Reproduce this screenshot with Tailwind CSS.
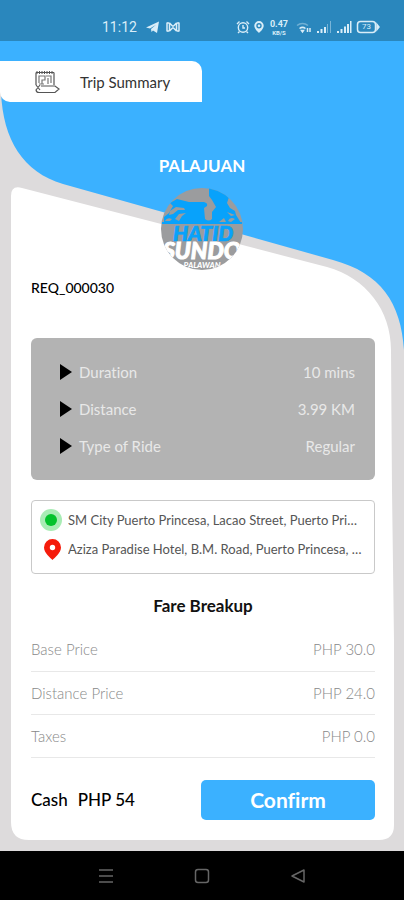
<!DOCTYPE html>
<html lang="en">
<head>
  <meta charset="UTF-8" />
  <meta name="viewport" content="width=device-width, initial-scale=1" />
  <title>Trip Summary</title>
  <script src="https://cdn.jsdelivr.net/npm/@tailwindcss/browser@4"></script>
</head>

<body class="flex flex-col min-h-screen bg-[#dddbdc] font-['Lato',sans-serif] [font-variant-ligatures:none] text-black">

  <!-- Status bar -->
  <header class="flex items-end justify-between h-[41px] pb-1 pl-[102px] pr-6 bg-[#2a87bd] text-[#d9edf8]">
    <div class="flex items-center gap-1 h-5">
      <span class="font-['Roboto',sans-serif] text-sm leading-5">11:12</span>
      <svg class="w-4 h-4 ml-1" viewBox="0 0 16 16" fill="currentColor"><path d="M1 8.500 14 2.500 12 14 8 11.500 6.500 13 6 10 11 5.800 5 9.500z"/></svg>
      <svg class="w-4 h-4" viewBox="0 0 16 16" fill="none" stroke="currentColor" stroke-width="1.500"><path d="M2 3.500v9M4.500 4l3 3h1l3-3M4.500 12l3-3h1l3 3M14 3.500v9M4.500 4v8M11.500 4v8"/><path d="M2 4h2.500M2 12h2.500M11.500 4H14M11.500 12H14"/></svg>
    </div>
    <div class="flex items-center h-5">
      <svg class="w-[14px] h-[14px]" viewBox="0 0 14 14" fill="none" stroke="currentColor" stroke-width="1.400"><circle cx="7" cy="7.500" r="4.700"/><path d="M7 5v3h2M1 4l2.500-2.500M13 4l-2.500-2.500M3.500 11.500 2 13M10.500 11.500 12 13"/></svg>
      <svg class="w-[14px] h-[14px] ml-[2px]" viewBox="0 0 14 14" fill="currentColor"><path fill-rule="evenodd" d="M7 1a4.700 4.700 0 0 1 4.700 4.700C11.700 9 7 13 7 13S2.300 9 2.300 5.700A4.700 4.700 0 0 1 7 1zm0 2a2.700 2.700 0 1 0 0 5.400A2.700 2.700 0 0 0 7 3z"/><circle cx="7" cy="5.700" r="1.300"/></svg>
      <div class="flex flex-col items-center ml-1 font-['Roboto',sans-serif] font-bold text-center">
        <span class="text-[9px] leading-[10px]">0.47</span>
        <span class="text-[6px] leading-[7px]">KB/S</span>
      </div>
      <svg class="w-4 h-[14px] ml-2" viewBox="0 0 16 14" fill="none" stroke="currentColor" stroke-width="1.500"><path d="M1 5.500a9 9 0 0 1 11 0" opacity=".4"/><path d="M3.500 8.500a5 5 0 0 1 6 0"/><path d="M5.500 10.500 6.500 12l1-1.500zM11.500 8v4M14 8v4"/></svg>
      <svg class="w-4 h-[14px] ml-1" viewBox="0 0 16 14" fill="currentColor"><path d="M1 11h2v2H1zM4.500 9h2v4h-2zM8 7h2v6H8z"/><path d="M11 4h1v9h-1zM14 1h1v12h-1z" opacity=".45"/></svg>
      <svg class="w-4 h-[14px] ml-1" viewBox="0 0 16 14" fill="currentColor"><path d="M1 11h2v2H1zM4.500 9h2v4h-2zM8 6.500h2V13H8zM11 4h2v9h-2zM14 1h1.500v12H14z"/></svg>
      <div class="relative ml-1 w-6 h-[14px]">
        <svg class="w-6 h-[14px]" viewBox="0 0 24 14" fill="none" stroke="currentColor" stroke-width="1.500"><rect x="1.500" y="1.500" width="18" height="11" rx="3"/><path d="M21 4.500 23 7l-2 2.500z" fill="currentColor"/></svg>
        <span class="absolute inset-0 pr-[3px] text-center font-['Roboto',sans-serif] text-[8px] leading-[14px]">73</span>
      </div>
    </div>
  </header>

  <main class="relative flex flex-col grow pb-[11px]">

    <!-- Blue header and white card shapes -->
    <svg class="absolute inset-0 w-full h-full" viewBox="0 41 404 810" preserveAspectRatio="none" aria-hidden="true">
      <path fill="#3bb1ff" d="M0 41H404V350C401 303 381 273 333 260L63 184C23 172 3 140 1 92L0 90z"/>
      <path fill="#fff" d="M11 196Q11 185 22 188L327 267C366 278 391 310 391 350L392 490 394 640V825Q394 840 379 840H29Q11 840 11 822z"/>
    </svg>

    <div class="relative flex flex-col grow">
      <div class="flex items-center mt-5 h-[41px] w-1/2 pl-[34px] gap-5 bg-white rounded-tr-[10px] rounded-bl-[10px]">
        <svg class="w-[26px] h-6" viewBox="0 0 26 24" fill="none" stroke="#555" stroke-width="1.200">
          <path d="M2 15V2.500M20 2.500V15M2 2.500h18" />
          <path d="M3 1v3M5.500 1v3M8 1v3M10.500 1v3M13 1v3M15.500 1v3M18 1v3" stroke-width="1"/>
          <path d="M5 13V6h6v4H8v4M12 6h5v7M14 8v6M5 14h5" stroke="#777"/>
          <path d="M7 16h14l4 3-4 3.500H5q-3 0-3-3M2 15l4 5M6 15l-4 5"/>
        </svg>
        <h1 class="text-[15px] leading-5 text-[#333]">Trip Summary</h1>
      </div>

      <p class="mt-[54px] text-center text-[17px] leading-5 font-bold text-white">PALAJUAN</p>

      <svg class="mt-3 mx-auto w-[82px] h-[82px]" viewBox="0 0 82 82" role="img" aria-label="Hatid Sundo Palawan">
        <clipPath id="badge"><circle cx="41" cy="41" r="41"/></clipPath>
        <g clip-path="url(#badge)">
          <rect width="82" height="82" fill="#9b9c9e"/>
          <path fill="#08a2fb" d="M3 35V29L8 25 12 18 9 15 16 11 28 14 43 14Q47 15 46 18L43 20 44 31Q48 34 51 31V24L55 19 51 12 48 8V0H60L68 9 66 15 69 20 74 23 75 27 80 35z"/>
          <path fill="#9b9c9e" d="M9 23 15 19 23 20 24 22 17 22 12 26 8 27zM14 31 18 26 25 25 21 28 18 33zM58 34 63 30 65 34zM66 24l8 3-4 1zM67 33q2-5 7-2l-4 3zM4 33q2-4 7-2l-2 2z"/>
          <path stroke="#08a2fb" stroke-width="2" d="M1 35h80"/>
          <text x="42" y="53" text-anchor="middle" font-family="Lato, sans-serif" font-weight="900" font-style="italic" font-size="21" fill="#08a2fb" stroke="#08a2fb" stroke-width=".7">HATID</text>
          <text x="41" y="71" text-anchor="middle" font-family="Lato, sans-serif" font-weight="900" font-style="italic" font-size="23" fill="#fff" stroke="#fff" stroke-width="1">SUNDO</text>
          <text x="41" y="80" text-anchor="middle" font-family="Lato, sans-serif" font-weight="900" font-style="italic" font-size="8" fill="#fff">PALAWAN</text>
        </g>
      </svg>

      <!-- Card content -->
      <div class="flex flex-col grow pl-[31px] pr-[29px]">
        <p class="mt-2 text-sm leading-5 font-medium">REQ_000030</p>

        <dl class="flex flex-col gap-[17px] mt-10 py-6 pl-[29px] pr-5 rounded-md bg-[#b3b3b3] text-[15px] leading-5 text-[#e8e8e8]">
          <div class="flex justify-between">
            <dt class="flex items-center gap-[7px]"><svg class="w-3 h-4" viewBox="0 0 12 16"><path d="M0 0 12 8 0 16z"/></svg>Duration</dt>
            <dd>10 mins</dd>
          </div>
          <div class="flex justify-between">
            <dt class="flex items-center gap-[7px]"><svg class="w-3 h-4" viewBox="0 0 12 16"><path d="M0 0 12 8 0 16z"/></svg>Distance</dt>
            <dd>3.99 KM</dd>
          </div>
          <div class="flex justify-between">
            <dt class="flex items-center gap-[7px]"><svg class="w-3 h-4" viewBox="0 0 12 16"><path d="M0 0 12 8 0 16z"/></svg>Type of Ride</dt>
            <dd>Regular</dd>
          </div>
        </dl>

        <ul class="flex flex-col gap-[7px] mt-5 pt-2 pb-[13px] pl-2 pr-3 border border-[#c9c9c9] rounded-sm text-[13px] leading-[22px] text-[#555]">
          <li class="flex items-center gap-[6px]">
            <svg class="w-[22px] h-[22px] shrink-0" viewBox="0 0 22 22"><circle cx="11" cy="11" r="11" fill="#a9ecb5"/><circle cx="11" cy="11" r="6" fill="#04c22c"/></svg>
            <span class="truncate">SM City Puerto Princesa, Lacao Street, Puerto Princesa</span>
          </li>
          <li class="flex items-center gap-[6px]">
            <svg class="w-[22px] h-[22px] shrink-0" viewBox="0 0 22 22"><path fill="#f51c0c" fill-rule="evenodd" d="M12.500 1a8.500 8.500 0 0 1 8.500 8.500C21 15 14.500 20 12.500 22 10.500 20 4 15 4 9.500A8.500 8.500 0 0 1 12.500 1zm0 5.800a2.700 2.700 0 1 0 0 5.400 2.700 2.700 0 0 0 0-5.400z"/></svg>
            <span class="truncate">Aziza Paradise Hotel, B.M. Road, Puerto Princesa, Palawan</span>
          </li>
        </ul>

        <table class="w-full mt-5 text-[15px] leading-5 text-[#888]">
          <caption class="pb-[10px] text-[17px] leading-6 font-bold text-[#111]">Fare Breakup</caption>
          <tbody>
            <tr class="h-[43px] border-b border-[#e8e8e8]"><th class="text-left font-light">Base Price</th><td class="text-right font-light">PHP 30.0</td></tr>
            <tr class="h-[43px] border-b border-[#e8e8e8]"><th class="text-left font-light">Distance Price</th><td class="text-right font-light">PHP 24.0</td></tr>
            <tr class="h-[43px] border-b border-[#e8e8e8]"><th class="text-left font-light">Taxes</th><td class="text-right font-light">PHP 0.0</td></tr>
          </tbody>
        </table>

        <div class="flex items-center justify-between mt-auto pt-[22px] pb-5">
          <p class="flex gap-[10px] text-[17px] leading-5 font-medium"><span>Cash</span><span>PHP 54</span></p>
          <button type="button" class="w-[174px] h-10 rounded-[5px] bg-[#3bb1ff] text-[21px] leading-6 font-bold text-white">Confirm</button>
        </div>
      </div>
    </div>
  </main>

  <!-- Navigation bar -->
  <nav class="flex items-center justify-between h-[49px] px-[98px] bg-black text-[#666]">
    <button type="button" aria-label="Recent apps"><svg class="w-4 h-4" viewBox="0 0 16 16" fill="none" stroke="currentColor" stroke-width="1.500"><path d="M1 2h14M1 8h14M1 14h14"/></svg></button>
    <button type="button" aria-label="Home"><svg class="w-4 h-4" viewBox="0 0 16 16" fill="none" stroke="currentColor" stroke-width="1.500"><rect x="1.500" y="1.500" width="13" height="13" rx="2.500"/></svg></button>
    <button type="button" aria-label="Back"><svg class="w-4 h-4" viewBox="0 0 16 16" fill="none" stroke="currentColor" stroke-width="1.500" stroke-linejoin="round"><path d="M14 2v12L2 8z"/></svg></button>
  </nav>

</body>
</html>
